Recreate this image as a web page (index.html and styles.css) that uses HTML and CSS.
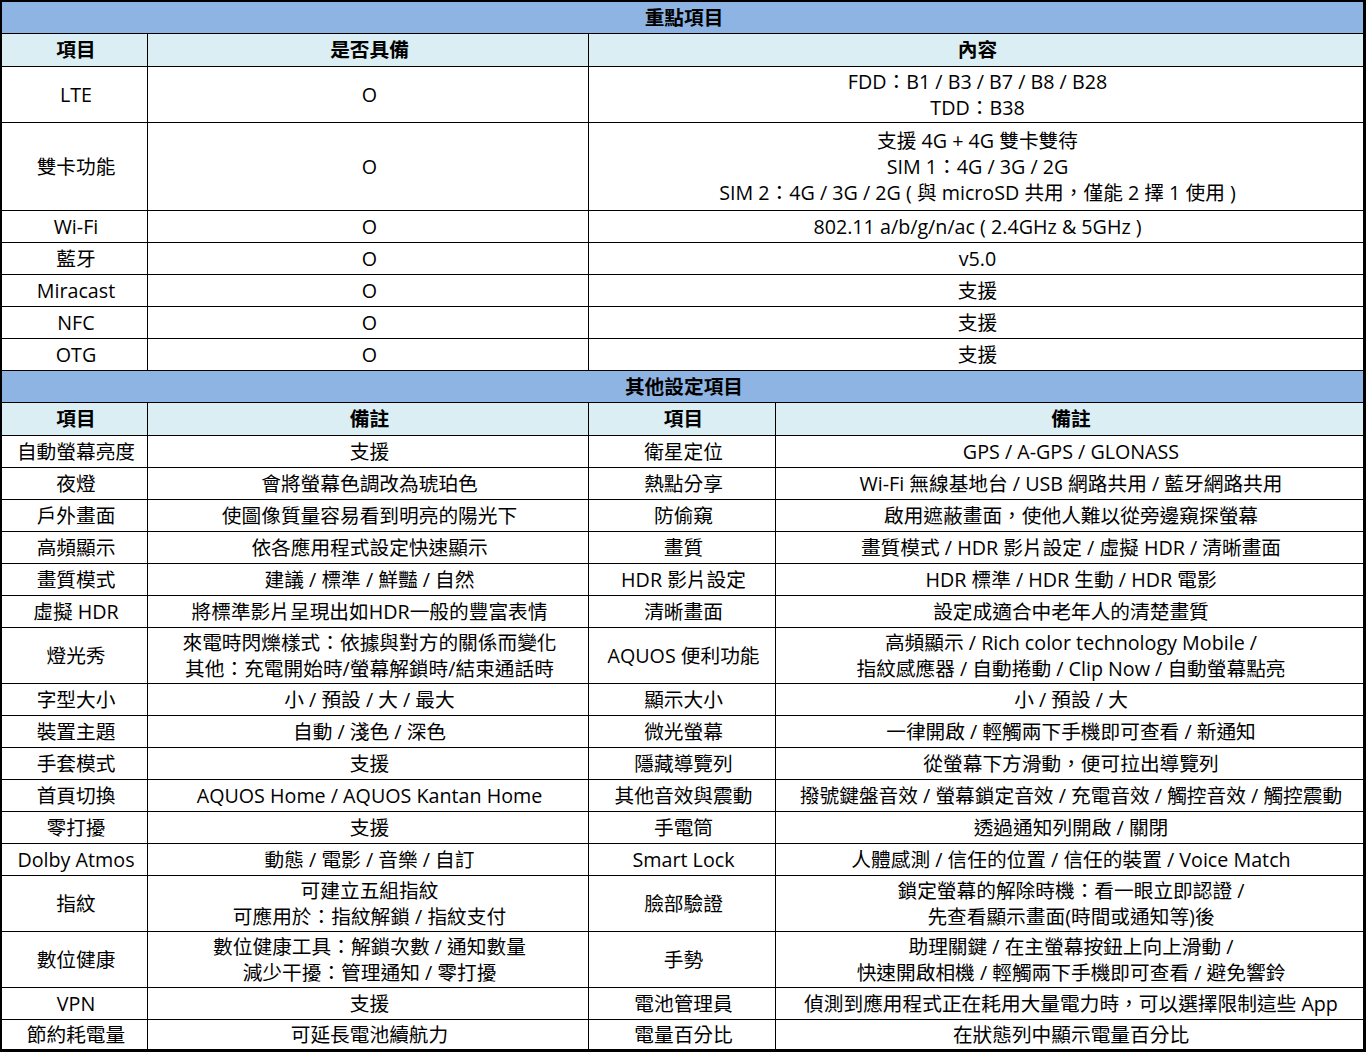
FILE: index.html
```html
<!DOCTYPE html>
<html lang="zh-Hant">
<head>
<meta charset="utf-8">
<title>規格表</title>
<link rel="stylesheet" href="styles.css">
</head>
<body>
<div class="sheet">
  <div class="c sec span4">重點項目</div>
  <div class="c hd">項目</div>
  <div class="c hd">是否具備</div>
  <div class="c hd span2">內容</div>

  <div class="c">LTE</div>
  <div class="c">O</div>
  <div class="c span2">FDD：B1 / B3 / B7 / B8 / B28<br>TDD：B38</div>

  <div class="c">雙卡功能</div>
  <div class="c">O</div>
  <div class="c span2">支援 4G + 4G 雙卡雙待<br>SIM 1：4G / 3G / 2G<br>SIM 2：4G / 3G / 2G ( 與 microSD 共用，僅能 2 擇 1 使用 )</div>

  <div class="c">Wi-Fi</div>
  <div class="c">O</div>
  <div class="c span2">802.11 a/b/g/n/ac ( 2.4GHz &amp; 5GHz )</div>

  <div class="c">藍牙</div>
  <div class="c">O</div>
  <div class="c span2">v5.0</div>

  <div class="c">Miracast</div>
  <div class="c">O</div>
  <div class="c span2">支援</div>

  <div class="c">NFC</div>
  <div class="c">O</div>
  <div class="c span2">支援</div>

  <div class="c">OTG</div>
  <div class="c">O</div>
  <div class="c span2">支援</div>

  <div class="c sec span4">其他設定項目</div>
  <div class="c hd">項目</div>
  <div class="c hd">備註</div>
  <div class="c hd">項目</div>
  <div class="c hd">備註</div>

  <div class="c">自動螢幕亮度</div>
  <div class="c">支援</div>
  <div class="c">衛星定位</div>
  <div class="c">GPS / A-GPS / GLONASS</div>

  <div class="c">夜燈</div>
  <div class="c">會將螢幕色調改為琥珀色</div>
  <div class="c">熱點分享</div>
  <div class="c">Wi-Fi 無線基地台 / USB 網路共用 / 藍牙網路共用</div>

  <div class="c">戶外畫面</div>
  <div class="c">使圖像質量容易看到明亮的陽光下</div>
  <div class="c">防偷窺</div>
  <div class="c">啟用遮蔽畫面，使他人難以從旁邊窺探螢幕</div>

  <div class="c">高頻顯示</div>
  <div class="c">依各應用程式設定快速顯示</div>
  <div class="c">畫質</div>
  <div class="c">畫質模式 / HDR 影片設定 / 虛擬 HDR / 清晰畫面</div>

  <div class="c">畫質模式</div>
  <div class="c">建議 / 標準 / 鮮豔 / 自然</div>
  <div class="c">HDR 影片設定</div>
  <div class="c">HDR 標準 / HDR 生動 / HDR 電影</div>

  <div class="c">虛擬 HDR</div>
  <div class="c">將標準影片呈現出如HDR一般的豐富表情</div>
  <div class="c">清晰畫面</div>
  <div class="c">設定成適合中老年人的清楚畫質</div>

  <div class="c">燈光秀</div>
  <div class="c">來電時閃爍樣式：依據與對方的關係而變化<br>其他：充電開始時/螢幕解鎖時/結束通話時</div>
  <div class="c">AQUOS 便利功能</div>
  <div class="c">高頻顯示 / Rich color technology Mobile /<br>指紋感應器 / 自動捲動 / Clip Now / 自動螢幕點亮</div>

  <div class="c">字型大小</div>
  <div class="c">小 / 預設 / 大 / 最大</div>
  <div class="c">顯示大小</div>
  <div class="c">小 / 預設 / 大</div>

  <div class="c">裝置主題</div>
  <div class="c">自動 / 淺色 / 深色</div>
  <div class="c">微光螢幕</div>
  <div class="c">一律開啟 / 輕觸兩下手機即可查看 / 新通知</div>

  <div class="c">手套模式</div>
  <div class="c">支援</div>
  <div class="c">隱藏導覽列</div>
  <div class="c">從螢幕下方滑動，便可拉出導覽列</div>

  <div class="c">首頁切換</div>
  <div class="c">AQUOS Home / AQUOS Kantan Home</div>
  <div class="c">其他音效與震動</div>
  <div class="c">撥號鍵盤音效 / 螢幕鎖定音效 / 充電音效 / 觸控音效 / 觸控震動</div>

  <div class="c">零打擾</div>
  <div class="c">支援</div>
  <div class="c">手電筒</div>
  <div class="c">透過通知列開啟 / 關閉</div>

  <div class="c">Dolby Atmos</div>
  <div class="c">動態 / 電影 / 音樂 / 自訂</div>
  <div class="c">Smart Lock</div>
  <div class="c">人體感測 / 信任的位置 / 信任的裝置 / Voice Match</div>

  <div class="c">指紋</div>
  <div class="c">可建立五組指紋<br>可應用於：指紋解鎖 / 指紋支付</div>
  <div class="c">臉部驗證</div>
  <div class="c">鎖定螢幕的解除時機：看一眼立即認證 /<br>先查看顯示畫面(時間或通知等)後</div>

  <div class="c">數位健康</div>
  <div class="c">數位健康工具：解鎖次數 / 通知數量<br>減少干擾：管理通知 / 零打擾</div>
  <div class="c">手勢</div>
  <div class="c">助理關鍵 / 在主螢幕按鈕上向上滑動 /<br>快速開啟相機 / 輕觸兩下手機即可查看 / 避免響鈴</div>

  <div class="c">VPN</div>
  <div class="c">支援</div>
  <div class="c">電池管理員</div>
  <div class="c">偵測到應用程式正在耗用大量電力時，可以選擇限制這些 App</div>

  <div class="c">節約耗電量</div>
  <div class="c">可延長電池續航力</div>
  <div class="c">電量百分比</div>
  <div class="c">在狀態列中顯示電量百分比</div>
</div>
</body>
</html>
```

FILE: styles.css
```css
html, body {
  margin: 0;
  padding: 0;
  background: #ffffff;
}

.sheet {
  width: 1366px;
  box-sizing: border-box;
  display: grid;
  grid-template-columns: 145px 440px 186px 1fr;
  grid-template-rows:
    31px 32px 55px 87px 31px 31px 31px 31px 31px
    31px 32px
    31px 31px 31px 31px 31px 31px 55px
    31px 31px 31px 31px 31px 31px 55px 55px 31px 29px;
  gap: 1px;
  padding: 2px 3px 3px 2px;
  background: #000000;
  font-family: "Open Sans", "Noto Sans CJK TC", sans-serif;
  font-size: 19.7px;
  color: #000000;
}

.c {
  background: #ffffff;
  display: flex;
  align-items: center;
  justify-content: center;
  text-align: center;
  line-height: 26px;
  white-space: nowrap;
  padding-left: 3px;
}

.span2 {
  grid-column: span 2;
}

.span4 {
  grid-column: span 4;
}

.sec {
  background: #8eb4e3;
  font-weight: bold;
}

.hd {
  background: #daeef3;
  font-weight: bold;
}
```
